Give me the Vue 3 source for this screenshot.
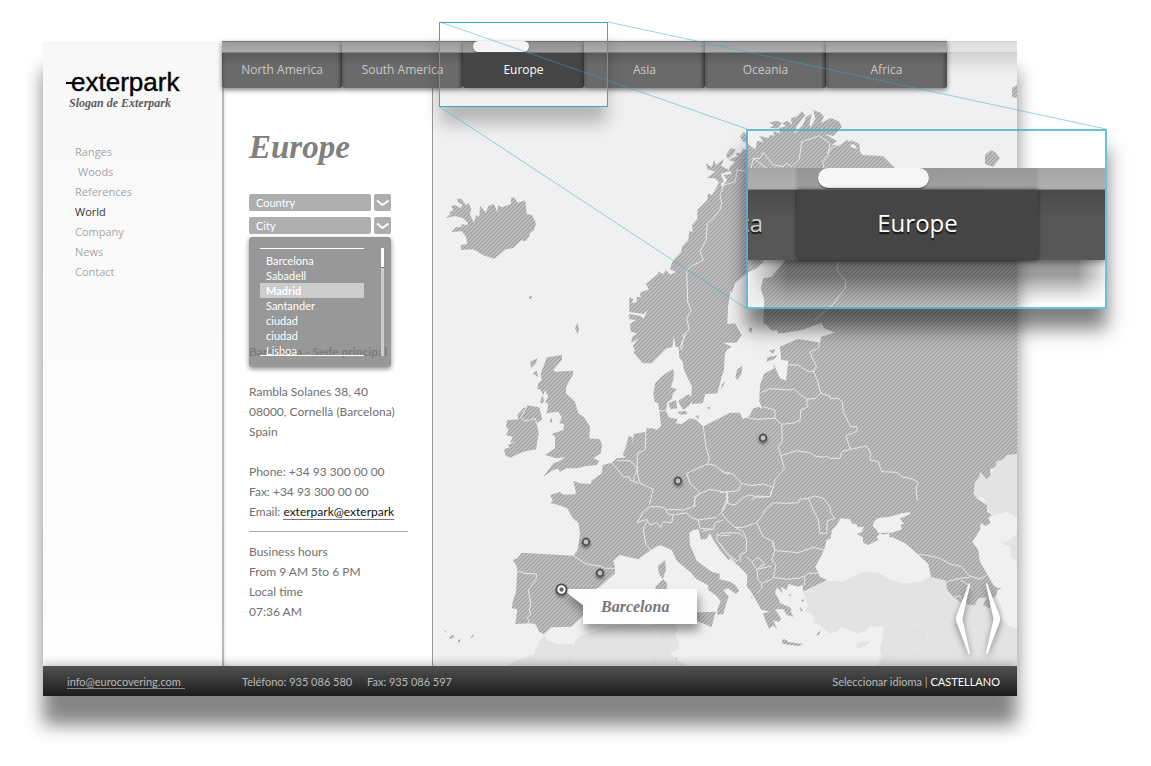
<script setup>
import { ref } from 'vue'

const menu = ['Ranges', 'Woods', 'References', 'World', 'Company', 'News', 'Contact']
const regions = ['North America', 'South America', 'Europe', 'Asia', 'Oceania', 'Africa']
const cities = ['Barcelona', 'Sabadell', 'Madrid', 'Santander', 'ciudad', 'ciudad', 'Lisboa']
const country = ref('Country')
const city = ref('City')

// Map outlines are stored per tile, in thirds of a map unit from the tile's origin.
const origins = { A: [430, 90], B: [620, 100], D: [430, 330], E: [430, 490], G: [720, 310], H: [720, 490], M: [0, 0] }
function path(def, close = true) {
  let tile = 'M'
  const out = []
  for (const token of def.trim().split(/\s+/)) {
    if (origins[token]) { tile = token; continue }
    const [x, y] = token.split(',').map(Number)
    const k = tile === 'M' ? 1 : 3
    out.push((origins[tile][0] + x / k).toFixed(1) + ' ' + (origins[tile][1] + y / k).toFixed(1))
  }
  return 'M' + out.join('L') + (close ? 'Z' : '')
}

const mainland = path(`
B 68,790 40,757 45,750 38,738 56,714 34,730 36,712 50,700 32,695 30,672 48,660 28,658 27,642 62,648 70,656 84,630 70,642 28,636
28,592 40,598 36,610 50,606 50,590 62,592 60,578 86,568 78,552 116,520 112,514 130,522 138,510 150,524 168,516 150,508 155,490 166,474 183,457 186,440 205,420 208,392 218,396 216,375 232,358
232,330 244,318 262,300 264,280 276,286 290,262 300,240 305,262 322,240 310,225 335,222 326,205 345,185 325,180 352,168 346,158 362,160 370,146 382,150 380,128
394,140 406,148 412,122 430,126 418,108 446,114 450,104 462,108 460,94 480,100 478,84 498,78 486,70 502,62 516,74 512,54 530,50
545,34 556,45 530,78 522,102 548,76 558,52 576,40 568,75 572,82 586,58 580,30 602,38 612,52 602,70 632,54 656,64 666,80 640,108 614,102 652,124 634,134 660,136 680,120
696,130 690,140 712,148 704,134 690,132 692,120 718,132 720,155 728,166
M 862,155 883,156 895,168 910,190 940,205 1017,180
G 891,432 860,435 852,446 830,455 826,470 810,478 812,494 800,508 780,485 778,500 765,516 762,540 758,560
H 758,10 770,25 800,45 802,66 815,75 805,85 812,98 796,108 782,98 780,120 757,155 775,180 780,215 800,250 820,285 828,292 846,296 832,300 830,315 815,330 815,340
808,355 790,345 800,322 775,325 765,345 750,345 720,335 700,320 682,300 678,272 633,260 625,222 590,190 555,160 535,150 514,140 508,144 508,130 490,134 480,130 470,140 475,150 445,165 430,158 428,142 410,132 425,126 432,110
414,112 410,103 395,100 390,88 362,85 350,105 335,122 332,145 320,150 312,180 300,205 286,230 300,260 322,270 290,285 250,305 248,285 235,290 205,282 200,300 182,290 188,310 170,292 165,310 175,325 180,340
206,352 220,380 200,375 190,358 165,358 184,386 176,396 160,390 172,420 160,406 148,418 138,395 128,370 150,366 122,358 116,345 90,300 80,290 82,255 60,232 30,205
E 895,210 870,180 850,150 840,130 828,148 812,148 806,118 790,120 778,130 780,165 800,212 845,245 870,252 868,268 900,275 915,284 928,302 918,312 895,295 880,300 896,320 888,342 880,372 862,375 862,358 872,335 860,318 835,300 835,286
800,268 780,245 740,212 725,180 690,165 662,180 625,208 570,195 550,212 555,232 555,250 510,290 490,300 482,325 470,340 475,365 445,390 425,410 365,412 342,433 328,425 316,402 300,400 256,402 262,358 246,355 248,335 258,305 262,240 258,225 248,210
262,205 275,188 430,197 443,180 450,130 445,98 428,85 412,55 375,42 362,40 368,30 360,15 390,6 400,14
D 432,493 438,490 430,453 450,460 480,462 485,452 515,430 518,405 545,398 560,385 588,382 578,375 588,350 596,318 608,322 606,345 612,312 648,305 650,295 668,295 680,300 694,288 690,262 688,240 684,220 674,215 670,190 676,158 700,135 728,118 732,124 730,150 722,172 740,178 728,192 725,208
712,216 708,242 716,262 742,268 738,280 755,282 780,265 800,270 820,290 828,285 900,248
G 0,320 30,308 60,308 68,328 88,318 100,295 118,290 125,298
B 425,920 418,905 420,855 432,822 462,805 460,790 480,835 498,842 505,782 484,780 480,740 533,717 570,722 598,728 604,710 645,698 612,685 605,668 545,690 490,700 475,700 470,690 455,692 440,675 430,670
433,600 422,565 430,535 455,530 480,500 505,470 515,440 520,415 510,395 490,380 455,385 430,415 425,445 430,485 410,505 380,520 345,550 335,580 332,570 324,620 322,672 345,670 365,705 350,728 310,728 335,740 320,750 314,765 312,810 305,830 292,880 256,882 248,910
216,912 214,880 216,860 205,838 192,810 188,785 178,772 176,742 166,740 162,708 157,742 140,745 95,790`)

const islands = [
  'A 47,385 62,372 56,366 70,362 64,348 76,346 92,354 97,346 82,334 82,325 95,328 108,345 116,340 124,358 120,372 131,398 138,376 148,380 150,347 168,368 175,349 190,342 196,350 202,368 204,345 215,352 243,342 243,324 252,322 264,338 286,331 290,372 306,375 318,400 312,420 300,430 298,440 285,454 274,450 250,474 228,478 192,506 160,496 130,478 93,480 92,466 112,462 108,440 95,424 64,426 78,412 96,410 94,402 110,406 114,398 98,384 75,378',
  'A 294,621 306,617 304,629', 'A 435,715 442,698 447,716 443,733',
  'B 258,190 275,202 282,180 288,195 312,176 304,198 332,212 302,222 312,246 300,250 285,235 260,234 285,215 262,208',
  'B 318,165 332,145 348,148 338,165 324,176', 'B 360,110 372,95 382,108 380,130 368,124', 'B 447,68 470,62 485,68 474,85 447,85 462,76',
  'B 386,694 388,682 396,684 396,698', 'B 346,830 352,808 367,798 365,820 352,840', 'B 303,872 306,852 316,842',
  'B 440,785 442,772 472,766 462,778', 'B 446,752 466,748 460,762', 'B 262,920 272,922 268,928',
  'D 340,440 370,400 385,395 405,382 380,385 345,375 375,355 375,320 365,312 400,300 402,282 388,280 395,262 385,245 350,250 355,222 345,215 355,200 345,180 340,195 330,178 322,178 325,160 335,150 332,130 340,112 350,82 396,75 396,90 370,120 375,125 428,122 430,132 408,170 408,190 435,215 445,250 462,262 480,290 478,325 510,328 516,345 512,370 490,385 508,392 500,405 470,408 440,415 410,415 390,425 384,416 370,420',
  'D 222,358 240,352 232,345 258,336 240,338 248,320 228,316 236,298 228,290 232,270 265,268 262,255 280,235 290,232 292,226 328,232 337,268 320,280 326,310 318,358 280,365 240,383 226,376',
  'D 300,95 322,85 318,100 304,115', 'D 308,130 320,122 325,142', 'D 330,215 338,195 342,212 336,222', 'D 358,275 366,262 366,278',
  'D 715,220 738,210 742,235 722,238', 'D 745,213 775,192 790,205 780,225 760,240 750,225', 'D 742,246 768,242 772,252 752,254', 'D 795,258 806,256 806,268', 'D 832,230 842,238 834,238',
  'E 676,290 700,268 712,280 708,330 682,332', 'E 684,228 705,210 708,240 698,268 686,250', 'E 785,368 858,365 852,382 845,412 800,392 785,384',
  'E 42,420 54,427 46,426', 'E 57,443 68,434 74,440 62,447', 'E 82,452 92,447 88,459', 'E 120,445 132,431 130,441', 'E 734,506 742,502 740,508',
  'H 185,460 188,448 200,450 204,456 250,462 235,468 205,464', 'H 288,435 302,420 298,434', 'H 180,340 210,352 216,362 196,354', 'H 205,315 216,312 210,320', 'H 242,330 254,328 248,336', 'H 240,352 250,362 242,364', 'H 92,320 98,322 96,328',
  'M 985,164 985,155 991,150 995,152 1000,158 993,167', 'M 1012,97 1012,88 1017,85 1017,98'
].map(d => path(d)).join('')

const azov = path('H 458,108 462,95 474,84 510,80 545,70 572,66 570,72 540,86 552,102 542,104 546,118 515,128 495,128 475,130 470,120')

const neighbours = [
  'E 342,435 350,450 380,462 400,462 430,462 445,440 490,425 530,412 570,405 610,402 650,408 680,402 735,402 745,415 735,435 748,455 745,475 720,490 735,505 790,540 790,620 200,620 225,530 265,510 310,495 325,460',
  'H 250,310 265,345 255,365 275,370 285,390 278,400 300,405 330,430 350,425 365,410 410,430 435,425 450,408 490,412 490,440 480,475 484,500 470,540 460,600 891,600 891,415 865,408 845,385 845,355 830,325 800,300 680,265 633,258 600,275 550,280 510,270 475,248 430,245 370,275 322,272 290,285',
  'H 405,465 418,456 450,452 440,466 415,475',
  'G 758,560 762,540 765,516 778,500 780,485 800,508 812,494 830,455 860,435 891,432 891,622 860,605 812,618 790,560 770,565',
  'H 891,130 870,150 845,160 870,170 875,195 870,200 891,215'
].map(d => path(d)).join('')

const borders = [
  'B 185,750 180,740 192,715 188,705 208,690 200,655 213,632 203,605 200,512 215,498 250,480 240,455 258,420 262,370 275,360 300,330 305,310 300,285 312,255 345,246 352,210 380,214',
  'B 393,205 400,175 420,175 430,158 460,195 490,200 498,190 515,200 538,178 545,125 598,107 630,130 625,165 608,185 612,205', 'B 400,175 440,205',
  'B 620,160 640,140 660,134', 'B 655,485 650,510 678,545 675,565 640,612 585,660',
  'G 302,85 295,115 270,125 275,140 290,170 280,183 292,210 302,250', 'G 205,165 235,165 265,185 283,183',
  'G 122,248 150,236 210,240 222,236 235,250 262,268 285,265 302,250 330,258 332,266 355,265 367,275 370,305 392,350 410,350 412,362 400,370 378,376 390,418', 'G 262,268 260,285 265,290 242,300 240,332 215,340 185,343 165,325 165,300 130,290', 'G 78,322 110,328 165,325',
  'G 185,345 187,395 175,410 182,435 193,475 165,510 160,530 150,560', 'G 182,437 205,430 230,422 270,428 285,438 310,442 320,438 330,445 360,445 365,425 390,418 440,408 452,430 450,450 475,455 485,485 530,487 545,500 580,508 595,518 588,535 592,572',
  'G 0,480 20,490 40,492 65,520 95,527 130,522 160,532', 'G 65,520 55,542 0,548', 'G 95,570 110,558 150,560',
  'D 820,290 828,350 838,385 832,405', 'D 770,430 832,402 850,405 862,412 885,430 900,428', 'D 770,430 780,460 812,490 840,478 890,488 894,520', 'D 812,490 795,505 793,530', 'D 648,305 645,360 622,370 622,430 630,460 670,478 658,525', 'D 545,398 560,415 580,440 598,440 600,450 612,455 628,460', 'D 560,392 598,392 612,402 622,420 612,440 612,455', 'D 688,242 712,242', 'D 290,232 272,262 285,274 315,265 322,285',
  'D 755,60 758,35 768,10',
  'E 430,197 465,220 478,224 510,228 525,235 555,235', 'E 260,250 270,243 282,250 320,252 318,268 295,300 302,340 298,360 302,372 292,382 298,400', 'E 660,50 640,65 622,98 650,88 660,105 680,98 692,112 700,95 725,98 730,75 715,72 705,55 690,50 660,50', 'E 650,95 640,120 648,165 662,180', 'E 708,60 730,58 760,60 795,48 793,22 812,8', 'E 730,75 770,68 780,80 805,90 860,82 880,60 890,40 890,10', 'E 805,90 810,115 850,118 855,98 880,90', 'E 815,125 830,120 850,118', 'E 862,130 870,138 900,135', 'E 862,130 860,150 895,195 915,215',
  'H 5,70 20,90 45,112 70,112 110,98 125,80 135,60 160,38 200,40 235,38 240,28 265,25', 'H 265,25 285,18 310,25 330,50 332,70 345,85 322,92 320,130 300,130 295,90 280,60 265,25', 'H 45,112 70,125 80,150 78,185 60,195 60,215', 'H 110,98 130,140 160,155 158,170 170,182 235,188 280,172 312,180', 'H 160,155 165,180 155,210 168,225 160,262 150,270 125,280 115,270 110,238 95,215 80,200', 'H 95,215 115,202 134,222 112,238', 'H 112,238 155,228', 'H 160,262 200,268 235,265 255,258 265,250 295,250', 'H 255,262 252,285', 'H 125,280 125,295 112,310', 'H 0,130 30,128 60,130 70,140', 'H 0,160 20,190 55,215', 'H 20,0 24,25 15,40 5,65', 'H 20,40 45,45 70,22 90,15 115,22 150,20 155,0',
  'H 590,192 620,196 660,205 690,222 725,230 745,255 760,262 780,268 800,255', 'H 680,275 720,265 750,262', 'H 722,270 745,285 760,300', 'H 705,320 720,318 725,330',
  'H 490,412 510,408 560,412 580,405 620,405 650,402 690,392', 'H 690,330 695,392', 'H 622,410 622,450 555,500 560,525', 'H 555,500 490,535', 'H 490,475 505,482 480,520', 'H 725,440 720,495 745,530',
  'E 430,462 437,530', 'E 680,405 682,460 655,500 660,530'
].map(d => path(d, false)).join('')

const pins = [[678, 481], [763, 438], [586, 542], [600, 573]]
</script>

<template>
  <div class="stage">
    <div class="shell">
      <aside class="side">
        <a class="logo" href="#"><i></i>exterpark</a>
        <p class="slogan">Slogan de Exterpark</p>
        <nav class="menu" aria-label="Main">
          <a v-for="m in menu" :key="m" href="#" :class="{ on: m === 'World', inset: m === 'Woods' }">{{ m }}</a>
        </nav>
      </aside>

      <nav class="top" aria-label="Regions">
        <a v-for="r in regions" :key="r" href="#" :class="{ on: r === 'Europe' }"><i></i><span>{{ r }}</span></a>
      </nav>

      <section class="info">
        <h1>Europe</h1>
        <div class="picker">
          <span class="box"></span>
          <span class="box"><svg viewBox="0 0 17 17"><path d="M3 6.500L8.500 11L14.500 6.500" /></svg></span>
          <select v-model="country" aria-label="Country"><option>Country</option><option>Spain</option></select>
        </div>
        <div class="picker">
          <span class="box"></span>
          <span class="box"><svg viewBox="0 0 17 17"><path d="M3 6.500L8.500 11L14.500 6.500" /></svg></span>
          <select v-model="city" aria-label="City"><option>City</option><option>Madrid</option></select>
          <div class="drop">
            <ul role="listbox" aria-label="Cities">
              <li v-for="(c, i) in cities" :key="i" role="option" :aria-selected="c === 'Madrid'">{{ c }}</li>
            </ul>
            <div class="track"><i></i></div>
          </div>
        </div>
        <h2>Barcelona - Sede principal</h2>
        <p>Rambla Solanes 38, 40<br>08000, Cornellà (Barcelona)<br>Spain</p>
        <p>Phone: +34 93 300 00 00<br>Fax: +34 93 300 00 00<br>Email: <a href="#">exterpark@exterpark</a></p>
        <hr>
        <p>Business hours<br>From 9 AM 5to 6 PM<br>Local time<br>07:36 AM</p>
      </section>

      <section class="map" aria-label="Map of Europe">
        <svg class="chart" viewBox="433 41 584 625" preserveAspectRatio="xMinYMin slice">
          <defs>
            <pattern id="sea" width="4" height="4" patternUnits="userSpaceOnUse">
              <rect width="4" height="4" fill="#f4f4f4" /><path d="M-1 1L1 -1M0 4L4 0M3 5L5 3" stroke="#ececec" stroke-width="1.400" />
            </pattern>
            <pattern id="land" width="4" height="4" patternUnits="userSpaceOnUse">
              <rect width="4" height="4" fill="#c6c6c6" /><path d="M-1 1L1 -1M0 4L4 0M3 5L5 3" stroke="#a0a0a0" stroke-width="1.400" />
            </pattern>
            <filter id="soft" x="-20%" y="-20%" width="150%" height="190%"><feDropShadow dx="2" dy="7" stdDeviation="5" flood-opacity=".4" /></filter>
            <filter id="pin" x="-50%" y="-50%" width="200%" height="220%"><feDropShadow dx="0" dy="2" stdDeviation="1.500" flood-opacity=".4" /></filter>
          </defs>
          <rect x="432" y="41" width="586" height="626" fill="url(#sea)" />
          <path :d="neighbours" fill="#e3e3e3" />
          <path :d="mainland" fill="url(#land)" />
          <path :d="islands" fill="url(#land)" />
          <path :d="azov" fill="url(#sea)" />
          <path :d="borders" fill="none" stroke="#e8e8e8" stroke-width="1" stroke-linejoin="round" />
          <g filter="url(#pin)" fill="#c2c2c2" stroke="#555" stroke-width="2">
            <circle v-for="p in pins" :key="p[0]" :cx="p[0]" :cy="p[1]" r="3.400" />
          </g>
          <path d="M562 589H697V624H583V605Z" fill="#fff" fill-opacity=".97" filter="url(#soft)" />
          <circle cx="561.500" cy="589.500" r="6" fill="#4c4c4c" filter="url(#pin)" />
          <circle cx="561.500" cy="589.500" r="3.200" fill="#666" stroke="#fff" stroke-width="2" />
          <text x="601" y="612">Barcelona</text>
        </svg>
        <div class="arrows">
          <button aria-label="Previous"><svg viewBox="0 0 16 72"><path d="M14 0Q15.500 0 15 2L7.500 36L15 70Q14.500 72 13.500 71L1 38V34Z" /></svg></button>
          <button aria-label="Next"><svg viewBox="0 0 16 72"><path d="M2 0Q.5 0 1 2L8.500 36L1 70Q1.500 72 2.500 71L15 38V34Z" /></svg></button>
        </div>
      </section>

      <footer>
        <a href="#">info@eurocovering.com</a>
        <span class="tel">Teléfono: 935 086 580</span><span>Fax: 935 086 597</span>
        <span class="lang">Seleccionar idioma | <b>CASTELLANO</b></span>
      </footer>
    </div>

    <div class="lens"></div>
    <div class="detail" aria-hidden="true">
      <div class="strip"><i></i></div>
      <div class="tabs"><span class="prev">ca</span><span class="cur">Europe</span><span></span></div>
      <div class="shade"></div>
    </div>
    <svg class="rays" width="1107" height="310"><path d="M440 22L747 129M608 22L1106 129M440 107L747 309" /></svg>
  </div>
</template>

<style>
body { background: #fff; }
</style>

<style scoped>
.stage { position: relative; padding: 41px 134px 70px 43px; font: 12px/20px Lato, "Open Sans", sans-serif; color: #707070; }
.stage * { box-sizing: border-box; }
.shell { display: grid; grid-template-columns: 179px 210px 1fr; background: #fff; box-shadow: 0 29px 17px rgba(0, 0, 0, .48); }
a { color: inherit; text-decoration: none; }
p, h1, h2 { margin: 0; }

.side { padding: 28px 23px 0; background: linear-gradient(rgba(255, 255, 255, 0), rgba(255, 255, 255, .8)), linear-gradient(135deg, #fdfdfd 25%, #f3f3f3 25% 50%, #fdfdfd 50% 75%, #f3f3f3 75%) 0 0 / 4px 4px; }
.logo { display: flex; align-items: center; height: 26px; color: #000; font: 26px/26px "Liberation Sans", Arial, sans-serif; -webkit-text-stroke: .4px #000; }
.logo i { width: 8px; height: 2px; margin: 2px -3px 0 0; background: #000; }
.slogan { padding-left: 3px; font: italic bold 12px/16px "Liberation Serif", serif; color: #5c5c5c; white-space: nowrap; }
.menu { display: flex; flex-direction: column; padding: 31px 0 0 9px; font-family: "Open Sans", sans-serif; font-size: 11px; color: #a6a6a6; }
.menu .on { color: #333; }
.menu .inset { padding-left: 3px; }

.top { grid-area: 1 / 2 / 2 / 4; align-self: start; z-index: 2; display: flex; height: 47px; background: linear-gradient(#cfcfcf, #dedede 2px, #e6e6e6 11px, #cfcfcf 11px, #cfcfcf 12px, rgba(0, 0, 0, .12) 12px, rgba(0, 0, 0, 0) 34px); }
.top a { width: 121px; height: 47px; padding-top: 12px; text-align: center; font: 12px/34px "Open Sans", sans-serif; color: #c8c8c8; border-radius: 0 0 2px 2px; background: linear-gradient(#767676, #767676 1px, #9b9b9b 1px, #adadad 11px, #808080 11px, #808080 12px, transparent 12px), linear-gradient(90deg, rgba(0, 0, 0, .15), transparent 4px, transparent 116px, rgba(0, 0, 0, .3)), linear-gradient(#5a5a5a 12px, #6a6a6a 24px, #6a6a6a); box-shadow: 0 2px 5px rgba(0, 0, 0, .5); }
.top a:first-child { width: 120px; }
.top i { display: none; }
.top .on { display: grid; grid-template: 12px 35px / 1fr; padding: 0; color: #fff; background: linear-gradient(#6f6f6f, #6f6f6f 1px, #8e8e8e 1px, #a0a0a0 11px, #777 11px, #777 12px, #454545 12px); }
.top .on i { display: block; width: 56px; height: 11px; margin-left: 10px; border-radius: 6px; background: #f5f5f5; box-shadow: 0 1px 1px rgba(0, 0, 0, .4); }

.info { grid-area: 1 / 2; padding: 85px 0 44px 25px; border-left: 2px solid #b8b8b8; box-shadow: inset 2px 0 2px rgba(0, 0, 0, .06); }
h1 { height: 68px; padding-top: 1px; font: italic bold 33px/40px "Liberation Serif", serif; color: #808080; }
.picker { position: relative; display: grid; grid-template-columns: 122px 17px; grid-template-rows: 17px; gap: 3px; margin-bottom: 6px; }
.box { background: #aeaeae; border-radius: 2px; }
.box svg { display: block; width: 17px; height: 17px; fill: none; stroke: #fff; stroke-width: 2; }
.picker select { grid-area: 1 / 1 / 2 / 3; appearance: none; height: 17px; border: 0; padding: 0 7px; background: none; color: #fff; font: 11px/17px Lato, sans-serif; outline: 0; }
.picker .box:nth-child(1) { grid-area: 1 / 1; }
.picker .box:nth-child(2) { grid-area: 1 / 2; }
.drop { position: absolute; top: 20px; left: 0; width: 142px; height: 130px; padding: 11px 7px 11px 11px; display: flex; justify-content: space-between; border-radius: 3px; background: rgba(126, 126, 126, .8); box-shadow: 0 2px 5px rgba(0, 0, 0, .45); }
.drop ul { width: 104px; margin: 0; padding: 4px 0 0; list-style: none; border: solid #fff; border-width: 1px 0; overflow: hidden; }
.drop li { padding-left: 6px; font-size: 11px; line-height: 15px; color: #fff; }
.drop li[aria-selected="true"] { background: #ccc; font-weight: bold; }
.track { width: 3px; background: #ccc; }
.track i { display: block; height: 20px; background: #fff; border-bottom: 1px solid #777; }
h2 { margin: 108px 0 20px; font-size: 12px; line-height: 20px; white-space: nowrap; }
.info p + p { margin-top: 20px; }
.info p a { color: #111; border-bottom: 1px solid #777; }
hr { height: 1px; margin: 9px 24px 10px 0; border: 0; background: #aaa; }

.map { grid-area: 1 / 3; position: relative; border-left: 1px solid #999; background: #f1f1f1; }
.chart { position: absolute; inset: 0; width: 100%; height: 100%; }
.chart text { font: italic bold 16px "Liberation Serif", serif; fill: #777; }
.arrows { position: absolute; right: 16px; bottom: 11px; display: flex; gap: 14px; }
.arrows button { width: 16px; height: 72px; padding: 0; border: 0; background: none; }
.arrows svg { display: block; width: 16px; height: 72px; overflow: visible; fill: #fff; filter: drop-shadow(0 3px 3px rgba(40, 40, 60, .55)); }

footer { grid-column: 1 / 4; z-index: 2; display: flex; align-items: center; height: 30px; padding: 2px 17px 0 24px; font-size: 11px; color: #b8b8b8; background: linear-gradient(#515151, #1c1c1c); box-shadow: 0 -2px 9px rgba(0, 0, 0, .25); clip-path: inset(-12px 0 0 0); line-height: 16px; }
footer a { width: 118px; white-space: nowrap; line-height: 13px; border-bottom: 1px solid #888; }
.tel { width: 125px; margin-left: 57px; }
.lang { margin-left: auto; }
.lang b { color: #fff; font-weight: normal; }

.lens { position: absolute; z-index: 3; left: 439px; top: 22px; width: 169px; height: 85px; border: 1px solid #32abc9; box-shadow: 0 18px 16px -2px rgba(0, 0, 0, .25); }
.detail { position: absolute; z-index: 3; left: 746px; top: 129px; width: 361px; height: 180px; padding-top: 37px; border: 2px solid rgba(60, 172, 198, .75); overflow: hidden; box-shadow: 0 20px 18px rgba(0, 0, 0, .5); }
.strip { height: 22px; background: linear-gradient(90deg, transparent 46px, rgba(0, 0, 0, .1) 50px, rgba(0, 0, 0, .08) 288px, transparent 292px), linear-gradient(#a6a6a6, #b0b0b0); border-bottom: 1px solid #888; }
.strip i { display: block; width: 111px; height: 20px; margin-left: 70px; border-radius: 10px; background: #f6f6f6; box-shadow: 0 1px 1px rgba(0, 0, 0, .5); }
.tabs { display: grid; grid-template-columns: 49px 241px 1fr; height: 70px; background: linear-gradient(#4a4a4a, #575757 30px); box-shadow: 0 3px 6px rgba(0, 0, 0, .35); font: 24px/66px "Open Sans", sans-serif; color: #fff; text-shadow: 0 2px 1px #111; text-align: center; }
.prev { display: flex; justify-content: flex-end; width: 15px; overflow: hidden; color: #ccc; }
.cur { border-radius: 0 0 4px 4px; background: #454545; box-shadow: 0 0 4px rgba(0, 0, 0, .6); }
.shade { height: 45px; background: linear-gradient(rgba(0, 0, 0, .42), rgba(0, 0, 0, .38) 16px, rgba(0, 0, 0, .12) 34px, rgba(0, 0, 0, 0)); mask-image: linear-gradient(90deg, transparent, #000 40px, #000 330px, rgba(0, 0, 0, .2)); }
.rays { position: absolute; z-index: 4; left: 0; top: 0; fill: none; stroke: #32abc9; stroke-opacity: .5; pointer-events: none; }
</style>
